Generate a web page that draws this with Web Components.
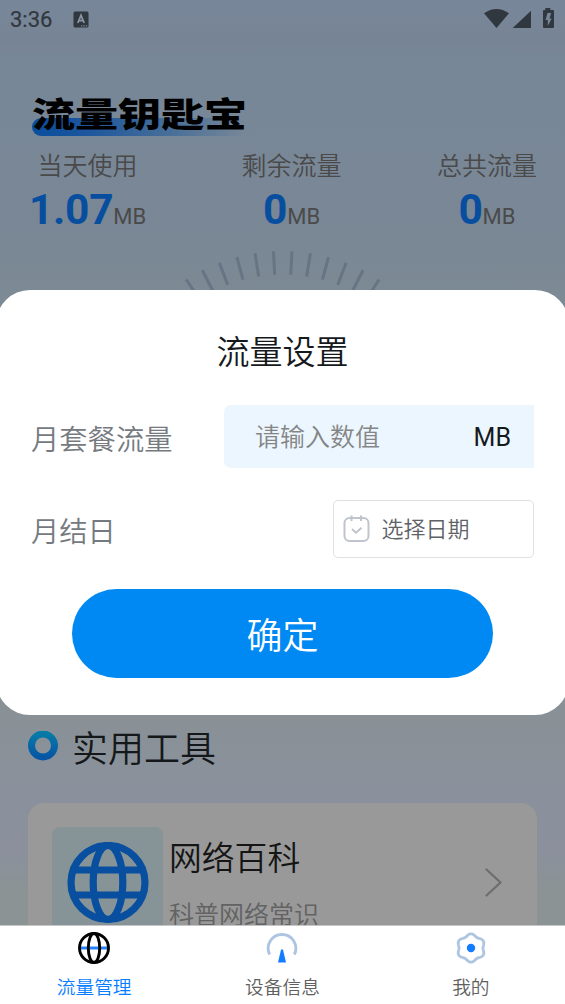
<!DOCTYPE html>
<html lang="zh-CN">
<head>
<meta charset="utf-8">
<title>流量钥匙宝</title>
<style>
html,body{margin:0;height:100%;overflow:hidden}
body{font-family:"Noto Sans CJK SC",Roboto,sans-serif;font-weight:350}
</style>
</head>
<body>
<traffic-app></traffic-app>
<script>
const define=(name,html)=>customElements.define(name,class extends HTMLElement{
  constructor(){
    super();
    const t=document.createElement('template');
    t.innerHTML=typeof html==='function'?html(this):html;
    this.attachShadow({mode:'open'}).append(t.content.cloneNode(true));
  }
});

define('status-bar',`<style>
:host{display:flex;height:38px;box-sizing:border-box;padding:0 10px;align-items:center;font:22px/38px Roboto,sans-serif;color:#30373e}
span{width:63px;padding-top:2px;-webkit-text-stroke:.2px #30373e}
.a{flex:1}
svg{display:block}
</style>
<span>3:36</span>
<div class="a"><svg width="16" height="17" viewBox="0 0 16 17"><rect x=".5" y=".5" width="15" height="16" rx="1.5" fill="#30373e"/><path d="M4.8 12 8 4.3 11.2 12M6 9.6h4" fill="none" stroke="#8996a5" stroke-width="1.7"/><path d="M8 14.9h6.5" stroke="#8996a5" stroke-dasharray="1.4 1"/></svg></div>
<svg width="73" height="22" viewBox="482 8 73 22" fill="#30373e"><path d="M484 13.200q12.500-8.600 25 0L496.500 28z"/><path d="M512.700 28 531 10.800V28z"/><path fill-rule="evenodd" d="M545.300 8h5v2h2.700q1 0 1 1v16q0 1-1 1h-9q-1 0-1-1V11q0-1 1-1h1.300zM547.500 13l-2 7h2.300v6l3.900-7.500h-2.200l1.700-5.500z"/></svg>`);

define('brand-title',`<style>
:host{display:block;position:relative;height:48px;margin:51px 0 0 32px;width:220px;isolation:isolate}
i{position:absolute;z-index:-1;left:0;top:29px;width:214px;height:18px;border-radius:9px;background:linear-gradient(90deg,#084e9d 0,#1c569e 25%,#426c99 60%,#788797 100%)}
b{display:block;width:180px;font:900 36px/48px "Noto Sans CJK SC",sans-serif;color:#000;white-space:nowrap;transform:translateY(-1px) scale(1.195,.95);transform-origin:0 50%}
</style><i></i><b>流量钥匙宝</b>`);

define('usage-stat',`<style>
:host{display:flex;flex-direction:column;align-items:center;color:#4a4a4a}
.l{font-size:25px;line-height:36px;height:36px;margin-left:-1px}
.v{font:22px/50px Roboto,sans-serif;height:50px;padding-top:3px;margin-left:-1px;white-space:nowrap}
b{font-size:42.500px;letter-spacing:-.3px;color:#084e9f}
</style><div class="l"><slot name="label"></slot></div><div class="v"><b><slot></slot></b>MB</div>`);

define('dial-ticks',()=>{
  let s='';
  for(let a=-33;a<=33;a+=6)s+=`<path d="M282.700 1v23.500" transform="rotate(${a} 282.700 178)"/>`;
  return `<style>:host{display:block;height:471.500px}svg{display:block}</style><svg width="565" height="60" fill="none" stroke="#667484" stroke-width="3">${s}</svg>`;
});

define('section-title',`<style>
:host{display:flex;align-items:center;gap:14px;padding-left:28px;height:48px;font-size:36px;line-height:48px;color:#15181a;margin-bottom:33.500px}
svg{display:block}</style>
<svg width="30" height="30"><defs><linearGradient id="g" x2="0" y2="1"><stop stop-color="#087aa8"/><stop offset="1" stop-color="#0656a4"/></linearGradient></defs><circle cx="15" cy="14.500" r="11.500" fill="none" stroke="url(#g)" stroke-width="7"/></svg><span><slot></slot></span>`);

define('tool-card',`<style>
:host{display:flex;margin:0 28px;height:160px;box-sizing:border-box;padding:24px 34px 0 24px;border-radius:16px;background:#999}
.i{width:111px;height:111px;border-radius:8px;background:#869497;display:grid;place-items:center}
.t{flex:1;padding-left:6px;white-space:nowrap}
h3{margin:5px 0 0;font-weight:inherit;font-size:32.800px;line-height:48px;color:#151515}
p{margin:15px 0 0;font-size:25px;line-height:36px;color:#626262}
.c{margin-top:41px}
svg{display:block}
</style><div class="i"><svg width="82" height="82" viewBox="-41 -40.500 82 82" fill="none" stroke="#094f9f" stroke-width="7.200"><circle r="37"/><ellipse rx="14.800" ry="37"/><path d="M-34-12.500h68M-34 12.500h68"/></svg></div>
<div class="t"><h3><slot></slot></h3><p><slot name="sub"></slot></p></div>
<svg class="c" width="18" height="30" fill="none" stroke="#6e6e6e" stroke-width="2.300" stroke-linecap="round" stroke-linejoin="round"><path d="M1.500 1.500 15.500 14.500 1.500 27.500"/></svg>`);

define('nav-item',`<style>
:host{flex:1;display:flex;flex-direction:column;align-items:center;font-size:18.700px;line-height:26px;color:#606060}
:host([active]){color:#087eff}
.i{height:34px;margin:5px 0 8px}
</style><div class="i"><slot name="icon"></slot></div><div class="l"><slot></slot></div>`);

define('bottom-nav',()=>{
  let p='';
  for(let i=0;i<=120;i++){const a=i*Math.PI/60,r=13.100+1.100*Math.cos(6*a);p+=(i?'L':'M')+(r*Math.sin(a)).toFixed(2)+' '+(-r*Math.cos(a)).toFixed(2);}
  return `<style>
:host{position:absolute;left:0;right:0;bottom:0;height:79px;box-sizing:border-box;border-top:1px solid #c4c6c8;display:flex;background:#fff}
svg{display:block}</style>
<nav-item active><svg slot="icon" width="34" height="34" viewBox="-17 -17 34 34" fill="none"><path d="M-13 0h26" stroke="#2284f8" stroke-width="3"/><g stroke="#000" stroke-width="2.900"><circle r="14.500"/><ellipse rx="5.700" ry="14.500"/></g></svg>流量管理</nav-item>
<nav-item><svg slot="icon" width="34" height="34" viewBox="-17 -17 34 34"><path d="M-12.300 6.500A13.800 13.800 0 1 1 12.300 6.500" fill="none" stroke="#adc5e1" stroke-width="2.900"/><path d="M-1 1.800Q0 .6 1 1.800L4 14.500H-4z" fill="#137cff"/></svg>设备信息</nav-item>
<nav-item><svg slot="icon" width="34" height="34" viewBox="-17 -17 34 34"><path d="${p}Z" fill="none" stroke="#adc5e1" stroke-width="2.800"/><circle r="4.200" fill="#137cff"/></svg>我的</nav-item>`;
});

define('form-row',`<style>
:host{display:flex;align-items:center;justify-content:space-between;padding:0 35px 0 35px;font-size:28.300px;line-height:40px;color:#757a80}
.l{padding-top:2px}
</style><span class="l"><slot name="label"></slot></span><slot></slot>`);

define('amount-field',`<style>
:host{display:flex;justify-content:space-between;align-items:center;width:310px;height:63px;box-sizing:border-box;padding:0 23px 0 31px;border-radius:7px 0 0 7px;background:#ebf6ff;font-size:25px;color:#858585}
.p{padding-bottom:3px}
.u{font:400 25px/40px Roboto,sans-serif;padding-top:2px;color:#16191c}
</style><span class="p"><slot></slot></span><span class="u">MB</span>`);

define('date-field',`<style>
:host{display:flex;align-items:center;gap:10.500px;width:201px;height:58px;box-sizing:border-box;padding:0 9px;border:1.500px solid #e0e1e4;border-radius:5px;font-size:22px;color:#606266}
svg{display:block}
.p{padding-bottom:4px}
</style><svg width="28" height="28" fill="none" stroke="#c0c4cc" stroke-width="2"><rect x="1.500" y="3" width="24" height="23" rx="5"/><path d="M8.500 .5v5.500M18 .5v5.500M9 14l4 3.700 5.500-5"/></svg><span class="p"><slot></slot></span>`);

define('settings-dialog',`<style>
:host{position:absolute;left:-4px;right:-4px;top:289.500px;height:425px;border-radius:34px;background:#fff;display:flex;flex-direction:column}
h2{margin:36px 0 31.500px;font-weight:inherit;font-size:33px;line-height:48px;text-align:center;color:#16191c}
form-row+form-row{margin-top:31.500px}
button{display:block;margin:31px auto 0;width:421px;height:89.500px;padding:0 0 1px;border:0;border-radius:45px;background:#0089f2;color:#fff;font:350 36px/88px "Noto Sans CJK SC",sans-serif}
</style><h2>流量设置</h2>
<form-row><span slot="label">月套餐流量</span><amount-field>请输入数值</amount-field></form-row>
<form-row><span slot="label">月结日</span><date-field>选择日期</date-field></form-row>
<button>确定</button>`);

define('traffic-app',`<style>
:host{display:block;position:relative;width:565px;height:1004px;overflow:hidden;background:linear-gradient(#778799 0,#778496 42px,#778798 60px,#7a8795 250px,#7c8a95 290px,#899196 715px,#8a919c 790px,#8b909c 850px,#8b9395 890px,#8b9395 100%)}
.stats{display:flex;justify-content:space-between;padding:0 28px 0 30px;margin-top:9px;height:104px}
</style>
<status-bar></status-bar>
<brand-title></brand-title>
<div class="stats">
<usage-stat><span slot="label">当天使用</span>1.07</usage-stat>
<usage-stat><span slot="label">剩余流量</span>0</usage-stat>
<usage-stat><span slot="label">总共流量</span>0</usage-stat>
</div>
<dial-ticks></dial-ticks>
<section-title>实用工具</section-title>
<tool-card>网络百科<span slot="sub">科普网络常识</span></tool-card>
<settings-dialog></settings-dialog>
<bottom-nav></bottom-nav>`);
</script>
</body>
</html>
